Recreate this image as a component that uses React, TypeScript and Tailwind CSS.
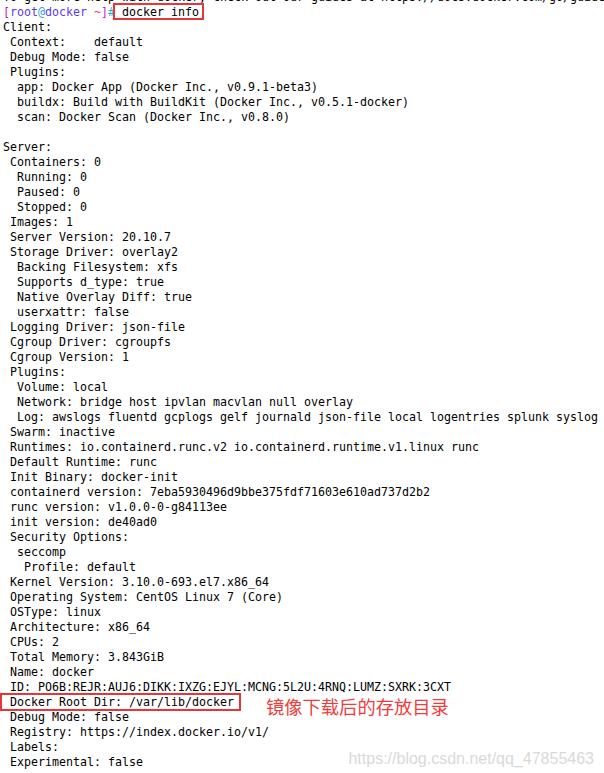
import React from "react";

const lines: string[] = [
  "Client:",
  " Context:    default",
  " Debug Mode: false",
  " Plugins:",
  "  app: Docker App (Docker Inc., v0.9.1-beta3)",
  "  buildx: Build with BuildKit (Docker Inc., v0.5.1-docker)",
  "  scan: Docker Scan (Docker Inc., v0.8.0)",
  "",
  "Server:",
  " Containers: 0",
  "  Running: 0",
  "  Paused: 0",
  "  Stopped: 0",
  " Images: 1",
  " Server Version: 20.10.7",
  " Storage Driver: overlay2",
  "  Backing Filesystem: xfs",
  "  Supports d_type: true",
  "  Native Overlay Diff: true",
  "  userxattr: false",
  " Logging Driver: json-file",
  " Cgroup Driver: cgroupfs",
  " Cgroup Version: 1",
  " Plugins:",
  "  Volume: local",
  "  Network: bridge host ipvlan macvlan null overlay",
  "  Log: awslogs fluentd gcplogs gelf journald json-file local logentries splunk syslog",
  " Swarm: inactive",
  " Runtimes: io.containerd.runc.v2 io.containerd.runtime.v1.linux runc",
  " Default Runtime: runc",
  " Init Binary: docker-init",
  " containerd version: 7eba5930496d9bbe375fdf71603e610ad737d2b2",
  " runc version: v1.0.0-0-g84113ee",
  " init version: de40ad0",
  " Security Options:",
  "  seccomp",
  "   Profile: default",
  " Kernel Version: 3.10.0-693.el7.x86_64",
  " Operating System: CentOS Linux 7 (Core)",
  " OSType: linux",
  " Architecture: x86_64",
  " CPUs: 2",
  " Total Memory: 3.843GiB",
  " Name: docker",
  " ID: PO6B:REJR:AUJ6:DIKK:IXZG:EJYL:MCNG:5L2U:4RNQ:LUMZ:SXRK:3CXT",
];

const after: string[] = [
  " Debug Mode: false",
  " Registry: https://index.docker.io/v1/",
  " Labels:",
  " Experimental: false",
];

const Line = ({ children }: { children?: React.ReactNode }) => (
  <div className="h-[15px] leading-[15px] whitespace-pre">{children}</div>
);

export default function App() {
  return (
    <div className="relative w-[604px] h-[773px] overflow-hidden bg-white text-black">
      <div
        className="mt-[-10px] pl-[3px] text-[11.63px]"
        style={{ fontFamily: '"DejaVu Sans Mono", "Liberation Mono", monospace' }}
      >
        <Line>To get more help with docker, check out our guides at https://docs.docker.com/go/guides/</Line>
        <Line>
          <span className="text-[#c418c4]">[</span>
          <span className="text-[#5a3cf0]">root</span>
          <span className="text-[#37a9dc]">@</span>
          <span className="text-[#5a3cf0]">docker</span>
          <span className="text-[#e0405a]"> ~</span>
          <span className="text-[#c418c4]">]</span>
          <span className="text-[#2fb0c8]">#</span>
          <span className="relative">
            {" docker info"}
            <span className="absolute left-[-2px] right-[-5px] top-[-2px] bottom-[-1px] border-2 border-[#e8353a]" />
          </span>
        </Line>
        {lines.map((l, i) => (
          <Line key={i}>{l}</Line>
        ))}
        <div className="relative h-[15px] leading-[15px] whitespace-pre">
          <span className="relative">
            {" Docker Root Dir: /var/lib/docker"}
            <span className="absolute left-[-3px] right-[-7px] top-[-2px] bottom-[-2px] border-2 border-[#e8353a]" />
          </span>
          <span
            className="absolute left-[263px] top-0 text-[18.3px] leading-[22px] text-[#f23c3c]"
            style={{ fontFamily: '"Noto Sans CJK SC", "Noto Sans", sans-serif' }}
          >
            镜像下载后的存放目录
          </span>
        </div>
        {after.map((l, i) => (
          <Line key={i}>{l}</Line>
        ))}
      </div>
      <div
        className="absolute right-[10px] bottom-[4px] text-[16px] leading-[20px] text-[#d9d9d9]"
        style={{ fontFamily: '"Liberation Sans", Arial, sans-serif' }}
      >
        https://blog.csdn.net/qq_47855463
      </div>
    </div>
  );
}
